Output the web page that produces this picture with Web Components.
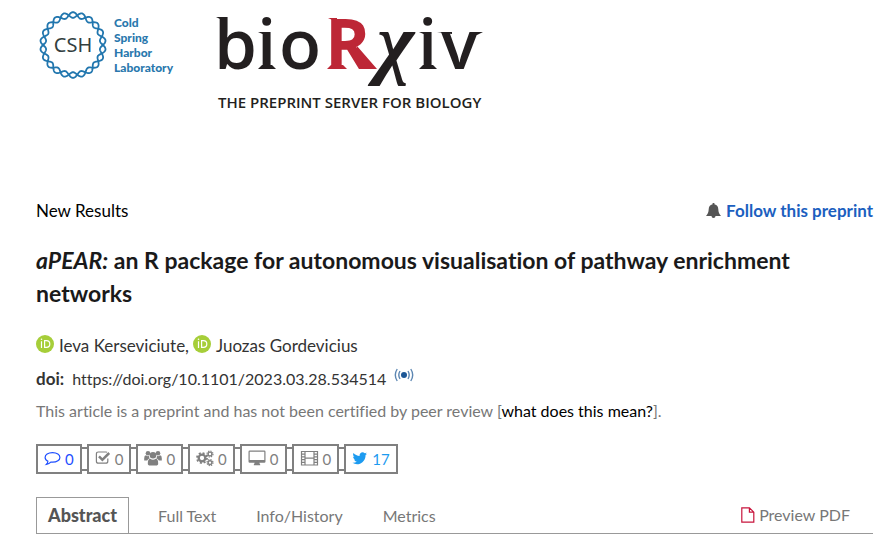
<!DOCTYPE html>
<html lang="en">
<head>
<meta charset="utf-8">
<meta name="viewport" content="width=device-width, initial-scale=1">
<title>aPEAR: an R package for autonomous visualisation of pathway enrichment networks | bioRxiv</title>
<style>
  body {
    margin: 0;
    background: #fff;
    color: #333;
    font: 17px/33px Lato, "Liberation Sans", sans-serif;
    font-variant-ligatures: none;
  }
</style>
</head>
<body>
<preprint-page>
  <site-header slot="header"></site-header>
  <span slot="category">New Results</span>
  <follow-link slot="follow" href="#follow">Follow this preprint</follow-link>
  <article-heading slot="heading">
    <em slot="name">aPEAR:</em>
    an R package for autonomous visualisation of pathway enrichment networks
    <orcid-author slot="authors">Ieva Kerseviciute,</orcid-author>
    <orcid-author slot="authors">Juozas Gordevicius</orcid-author>
    <span slot="doi">https://doi.org/10.1101/2023.03.28.534514</span>
  </article-heading>
  <metric-bar slot="metrics">
    <metric-badge icon="comment" label="Comments" tone="link">0</metric-badge>
    <metric-badge icon="check" label="Reviews">0</metric-badge>
    <metric-badge icon="users" label="Community reviews">0</metric-badge>
    <metric-badge icon="cogs" label="Automated services">0</metric-badge>
    <metric-badge icon="desktop" label="Blogs and media">0</metric-badge>
    <metric-badge icon="film" label="Videos">0</metric-badge>
    <metric-badge icon="twitter" label="Tweets" tone="tweet">17</metric-badge>
  </metric-bar>
  <article-tabs slot="tabs">
    <article-tab active href="#abstract">Abstract</article-tab>
    <article-tab href="#full-text">Full Text</article-tab>
    <article-tab href="#info">Info/History</article-tab>
    <article-tab href="#metrics">Metrics</article-tab>
    <pdf-link slot="end" href="#pdf">Preview PDF</pdf-link>
  </article-tabs>
</preprint-page>

<script>
class BaseElement extends HTMLElement {
  connectedCallback() {
    if (this.shadowRoot) return;
    this.attachShadow({ mode: "open" }).innerHTML = this.render();
  }
}

class PreprintPage extends BaseElement {
  render() {
    return `
      <style>
        :host { display: block; }
        main { padding: 80px 23px 8px 36px; }
        .top {
          display: flex;
          justify-content: space-between;
          color: #000;
        }
      </style>
      <slot name="header"></slot>
      <main>
        <div class="top"><slot name="category"></slot><slot name="follow"></slot></div>
        <slot name="heading"></slot>
        <slot name="metrics"></slot>
        <slot name="tabs"></slot>
      </main>`;
  }
}

class SiteHeader extends BaseElement {
  render() {
    return `
      <style>
        :host { display: block; }
        header {
          display: flex;
          align-items: flex-start;
          gap: 37px;
          padding: 10px 36px 0;
        }
      </style>
      <header><cshl-logo></cshl-logo><biorxiv-logo></biorxiv-logo></header>`;
  }
}

class CshlLogo extends BaseElement {
  // one strand of the helix bent into a ring
  #strand(sign) {
    const points = [];
    for (let i = 0; i <= 360; i++) {
      const a = (i * Math.PI) / 180;
      const r = 30 + sign * 2.8 * Math.sin(11 * a);
      points.push(`${(37 + r * Math.cos(a)).toFixed(2)} ${(35 + r * Math.sin(a)).toFixed(2)}`);
    }
    return `<path d="M${points.join("L")}Z"/>`;
  }

  render() {
    return `
      <style>
        :host { display: block; }
        a { display: flex; gap: 4px; text-decoration: none; color: #2a78ad; }
        svg { display: block; }
        .name { width: 66px; padding-top: 5px; font: 900 12px/15px Lato, sans-serif; }
        .name span { display: block; }
      </style>
      <a href="#cshl">
        <svg width="74" height="70" viewBox="0 0 74 70">
          <g fill="none" stroke="#2176ae" stroke-width="1.8">${this.#strand(1)}${this.#strand(-1)}</g>
          <text x="37" y="42" text-anchor="middle" font-family="Noto Sans, sans-serif" font-size="20" fill="#333f3f">CSH</text>
        </svg>
        <div class="name"><span>Cold</span><span>Spring</span><span>Harbor</span><span>Laboratory</span></div>
      </a>`;
  }
}

class BiorxivLogo extends BaseElement {
  render() {
    return `
      <style>
        :host, a, svg { display: block; }
        svg { overflow: visible; }
        .mark { font: 600 69px "Open Sans", sans-serif; }
        .r { font-weight: 700; fill: #bd2736; }
        .chi { font: italic bold 80px "Liberation Serif", serif; }
        .tagline { font: 600 15px "Open Sans", sans-serif; }
      </style>
      <a href="#home">
        <svg width="270" height="104" viewBox="0 0 270 104" fill="#231f20">
          <g class="mark">
            <text x="-3" y="59">b</text>
            <text x="40" y="59">i</text>
            <text x="62" y="59">o</text>
            <text class="r" x="108" y="59">R</text>
            <text class="chi" x="160" y="59">χ</text>
            <text x="201" y="59">i</text>
            <text x="224" y="59">v</text>
          </g>
          <path d="M-1 7H8V11L3 9ZM41 22H50V26ZM41 59 45 55H55L59 59ZM202 22H211V26ZM202 59 206 55H216L220 59ZM220 22H235V24ZM254 22H266L260 25H256Z"/>
          <path fill="#bd2736" d="M111 8H120V12ZM110 59 114 55H126L130 59ZM140 36 160 59H150L138 42Z"/>
          <text class="tagline" x="1" y="98">THE PREPRINT SERVER FOR BIOLOGY</text>
        </svg>
      </a>`;
  }
}

class FollowLink extends BaseElement {
  render() {
    return `
      <style>
        a {
          display: flex;
          align-items: center;
          gap: 5px;
          color: #1c5fbf;
          font-size: 17px;
          font-weight: 700;
          text-decoration: none;
        }
      </style>
      <a href="${this.getAttribute("href")}">
        <svg width="15" height="16" viewBox="0 0 15 16" fill="#555">
          <path d="M6.6 0H8.4V1.3C11.2 1.8 12.2 3.8 12.3 6.3 12.4 9.3 13.2 11.2 15 13H9.5A2 2 0 0 1 5.5 13H0C1.8 11.2 2.6 9.3 2.7 6.3 2.8 3.8 3.8 1.8 6.6 1.3Z"/>
        </svg>
        <slot></slot>
      </a>`;
  }
}

class ArticleHeading extends BaseElement {
  render() {
    return `
      <style>
        :host { display: block; }
        h1 {
          margin: 17px 0 19px;
          color: #1a1a1a;
          font-size: 23px;
          line-height: 33px;
          font-weight: 700;
        }
        .authors { display: flex; gap: 4px; }
        .doi { display: flex; gap: 8px; font-size: 16px; }
        .doi b { font-size: 17px; }
        .doi svg { margin-top: 5px; }
        p { margin: 0; color: #777; font-size: 16px; line-height: 32px; }
        p a { color: #000; text-decoration: none; }
      </style>
      <h1><slot name="name"></slot> <slot></slot></h1>
      <div class="authors"><slot name="authors"></slot></div>
      <div class="doi">
        <b>doi:</b><slot name="doi"></slot>
        <svg width="20" height="16" viewBox="0 0 20 16" fill="none" stroke="#5d87b3" stroke-width="1.4">
          <circle cx="10" cy="8" r="3" fill="#1c5796" stroke="none"/>
          <path d="M6 4Q3.6 8 6 12M3.2 2Q-.6 8 3.2 14M14 4Q16.4 8 14 12M16.8 2Q20.6 8 16.8 14"/>
        </svg>
      </div>
      <p>This article is a preprint and has not been certified by peer review [<a href="#meaning">what does this mean?</a>].</p>`;
  }
}

class OrcidAuthor extends BaseElement {
  render() {
    return `
      <style>
        :host { display: flex; gap: 5px; }
        svg { margin-top: 6px; }
      </style>
      <svg width="18" height="18" viewBox="0 0 18 18">
        <circle cx="9" cy="9" r="9" fill="#a6ce39"/>
        <path d="M5.5 6.2V13M8.6 5.6V12.4H10.4A3.4 3.4 0 0 0 10.4 5.6Z" fill="none" stroke="#fff" stroke-width="1.2"/>
        <circle cx="5.5" cy="4.3" r=".8" fill="#fff"/>
      </svg>
      <span><slot></slot></span>`;
  }
}

class MetricBar extends BaseElement {
  render() {
    return `
      <style>
        :host { display: flex; gap: 5px; margin: 17px 0 23px; }
      </style>
      <slot></slot>`;
  }
}

// [width, markup]
const metricIcons = {
  comment: [17, `<path fill="none" stroke="currentColor" stroke-width="1.2" d="M8.5 2.6C13 2.6 15.9 4.8 15.9 7.4S13 12.2 8.5 12.2L6.8 12.1C5.8 13.2 4.3 14 2.4 14.3 3.3 13.4 3.8 12.4 3.9 11.2 2 10.3 1.1 9 1.1 7.4 1.1 4.8 4 2.6 8.5 2.6Z"/>`],
  check: [16, `<path fill="none" stroke="currentColor" stroke-width="1.2" d="M12 2.3Q11.5 2 10.8 2H3.4Q1.4 2 1.4 4V11.2Q1.4 13.2 3.4 13.2H10.8Q12.8 13.2 12.8 11.2V8.5"/><path fill="none" stroke="currentColor" stroke-width="2.5" d="M4 6.4 7.4 9.8 14.2 3"/>`],
  users: [18, `<circle cx="4" cy="3.2" r="2.3"/><circle cx="14" cy="3.2" r="2.3"/><path d="M.2 10.4V8.2Q.2 5.3 2 5.2 3.8 6.8 5 5.8 4.8 7.3 5.8 8.6 4 8.7 3.2 10.4ZM17.8 10.4V8.2Q17.8 5.3 16 5.2 14.2 6.8 13 5.8 13.2 7.3 12.2 8.6 14 8.7 14.8 10.4Z"/><circle cx="9" cy="5.3" r="3.3"/><path d="M3.8 13.4C3.8 10.4 4.6 8.8 6.2 8.7 8 10.2 10 10.2 11.8 8.7 13.4 8.8 14.2 10.4 14.2 13.4 14.2 14.8 13.4 15.6 12 15.6H6C4.6 15.6 3.8 14.8 3.8 13.4Z"/>`],
  cogs: [18, `<g fill="none" stroke="currentColor"><circle cx="6" cy="8" r="3.3" stroke-width="2.3"/><circle cx="6" cy="8" r="5" stroke-width="1.8" stroke-dasharray="2 1.93"/><circle cx="14" cy="4" r="1.9" stroke-width="1.4"/><circle cx="14" cy="4" r="3" stroke-width="1.2" stroke-dasharray="1.3 1.06"/><circle cx="14" cy="12.6" r="1.9" stroke-width="1.4"/><circle cx="14" cy="12.6" r="3" stroke-width="1.2" stroke-dasharray="1.3 1.06"/></g>`],
  desktop: [18, `<path fill-rule="evenodd" d="M1.7.6H16.3Q17.5.6 17.5 1.8V11.6Q17.5 12.8 16.3 12.8H11.4Q11.4 13.7 12.2 14.4V15.2H5.8V14.4Q6.6 13.7 6.6 12.8H1.7Q.5 12.8.5 11.6V1.8Q.5.6 1.7.6ZM1.7 1.8V9.9H16.3V1.8Z"/>`],
  film: [19, `<path fill="none" stroke="currentColor" stroke-width="1.2" d="M1.5 1.5H17.5V15H1.5ZM5 1.5V15M14 1.5V15M5 8.2H14M1.5 4.2H5M1.5 6.9H5M1.5 9.6H5M1.5 12.3H5M14 4.2H17.5M14 6.9H17.5M14 9.6H17.5M14 12.3H17.5"/>`],
  twitter: [16, `<path transform="translate(-.5) scale(.0092)" d="M1684 408q-67 98-162 167 1 14 1 42 0 130-38 259.5t-115.5 248.5-184.5 210.5-258 146-323 54.5q-271 0-496-145 35 4 78 4 225 0 401-138-105-2-188-64.5t-114-159.5q33 5 61 5 43 0 85-11-112-23-185.5-111.5t-73.5-205.5v-4q68 38 146 41-66-44-105-115t-39-154q0-88 44-163 121 149 294.5 238.5t371.5 99.5q-8-38-8-74 0-134 94.5-228.5t228.5-94.5q140 0 236 102 109-21 205-78-37 115-142 178 93-10 186-50z"/>`]
};

class MetricBadge extends BaseElement {
  render() {
    const [width, icon] = metricIcons[this.getAttribute("icon")];
    return `
      <style>
        :host { display: block; position: relative; color: #808080; }
        :host([tone="link"]) { color: #1f4fff; }
        :host([tone="tweet"]) { color: #1d9bf0; }
        button {
          display: flex;
          align-items: center;
          gap: 4px;
          box-sizing: border-box;
          height: 30px;
          padding: 0 6px;
          border: 2px solid #808080;
          background: #fff;
          color: inherit;
          font: inherit;
          font-size: 15px;
          line-height: 26px;
        }
        svg { margin-bottom: 2px; }
        /* link between two neighbouring boxes */
        :host(:not(:last-of-type))::after {
          content: "";
          position: absolute;
          top: 3px;
          left: 100%;
          box-sizing: border-box;
          width: 5px;
          height: 24px;
          border: solid #808080;
          border-width: 2px 0;
        }
      </style>
      <button type="button" aria-label="${this.getAttribute("label")}">
        <svg width="${width}" height="17" viewBox="0 0 ${width} 17" fill="currentColor">${icon}</svg>
        <slot></slot>
      </button>`;
  }
}

class ArticleTabs extends BaseElement {
  render() {
    return `
      <style>
        :host { display: block; }
        nav {
          display: flex;
          justify-content: space-between;
          padding-right: 23px;
          border-bottom: 1px solid #999;
        }
        .tabs { display: flex; gap: 18px; }
      </style>
      <nav><div class="tabs"><slot></slot></div><slot name="end"></slot></nav>`;
  }
}

class ArticleTab extends BaseElement {
  render() {
    return `
      <style>
        a {
          display: block;
          padding: 0 10px;
          border: 1px solid transparent;
          border-bottom: 0;
          color: #777;
          font-size: 16px;
          line-height: 35px;
          text-decoration: none;
        }
        :host([active]) a { padding: 0 11px; border-color: #999; color: #555; font-size: 18px; font-weight: 900; }
      </style>
      <a href="${this.getAttribute("href")}"><slot></slot></a>`;
  }
}

class PdfLink extends BaseElement {
  render() {
    return `
      <style>
        a {
          display: flex;
          align-items: center;
          gap: 4px;
          color: #777;
          font-size: 16px;
          line-height: 36px;
          text-decoration: none;
        }
      </style>
      <a href="${this.getAttribute("href")}">
        <svg width="14" height="16" viewBox="0 0 14 16" fill="none" stroke="#c8143c" stroke-width="1.2">
          <path d="M.8.8H8.4L12.8 5.2V15.2H.8ZM8.4.8V5.2H12.8"/>
        </svg>
        <slot></slot>
      </a>`;
  }
}

customElements.define("preprint-page", PreprintPage);
customElements.define("site-header", SiteHeader);
customElements.define("cshl-logo", CshlLogo);
customElements.define("biorxiv-logo", BiorxivLogo);
customElements.define("follow-link", FollowLink);
customElements.define("article-heading", ArticleHeading);
customElements.define("orcid-author", OrcidAuthor);
customElements.define("metric-bar", MetricBar);
customElements.define("metric-badge", MetricBadge);
customElements.define("article-tabs", ArticleTabs);
customElements.define("article-tab", ArticleTab);
customElements.define("pdf-link", PdfLink);
</script>
</body>
</html>
